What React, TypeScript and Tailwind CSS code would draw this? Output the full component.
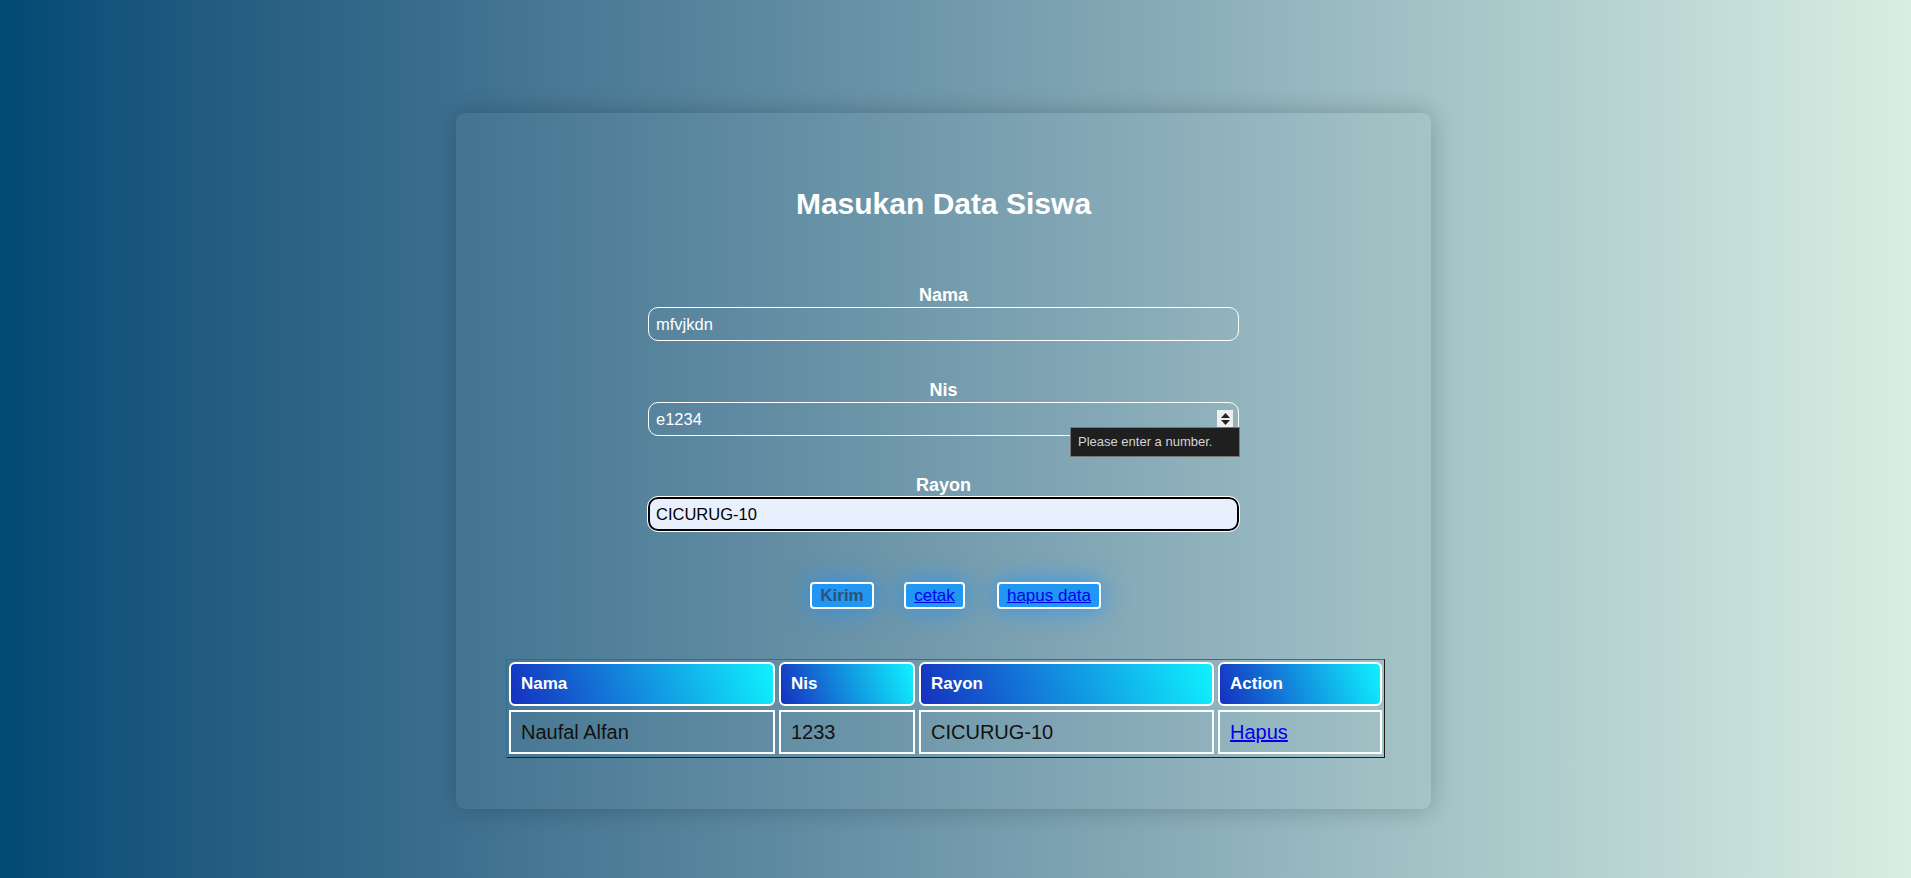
import React from "react";

function Field({
  label,
  value,
  children,
  variant = "plain",
}: {
  label: string;
  value: string;
  children?: React.ReactNode;
  variant?: "plain" | "focused";
}) {
  return (
    <div className="flex flex-col items-center">
      <label className="text-[18px] leading-[20px] font-bold text-white">{label}</label>
      <div className="relative mt-[2px] w-[591px]">
        {variant === "plain" ? (
          <input
            readOnly
            value={value}
            className="block h-[34px] w-full rounded-[10px] border border-white bg-transparent pl-[7px] text-[16.5px] text-white outline-none"
          />
        ) : (
          <input
            readOnly
            value={value}
            className="block h-[34px] w-full rounded-[10px] border-2 border-black bg-[#e8f0fe] pl-[6px] text-[16.5px] text-black outline-1 outline-white"
          />
        )}
        {children}
      </div>
    </div>
  );
}

export default function App() {
  const headers = ["Nama", "Nis", "Rayon", "Action"];
  return (
    <div className="flex min-h-[878px] w-full justify-center bg-gradient-to-r from-[#004a74] to-[#d8eee2] pr-[24px] pt-[113px] font-['Liberation_Sans',Arial,sans-serif]">
      <div className="flex h-[696px] w-[975px] flex-col items-center rounded-[9px] bg-white/[0.03] pt-[73px] shadow-[0_0_24px_rgba(0,0,0,0.22)]">
        <h1 className="text-[30px] leading-[36px] font-bold text-white">Masukan Data Siswa</h1>

        <div className="mt-[63px] flex flex-col gap-[39px]">
          <Field label="Nama" value="mfvjkdn" />
          <Field label="Nis" value="e1234">
            <div className="absolute right-[6px] top-[8px] flex h-[18px] w-[16px] flex-col items-center justify-center gap-[2px] bg-[#efefef]">
              <svg width="9" height="5" viewBox="0 0 9 5">
                <polygon points="4.5,0 9,5 0,5" fill="#222" />
              </svg>
              <svg width="9" height="5" viewBox="0 0 9 5">
                <polygon points="0,0 9,0 4.5,5" fill="#222" />
              </svg>
            </div>
            <div className="absolute left-[422px] top-[25px] z-10 flex h-[30px] w-[170px] items-center border border-[#767676] bg-[#1f1f1f] px-[7px] text-[13px] text-[#d4d4d4]">
              Please enter a number.
            </div>
          </Field>
          <Field label="Rayon" value="CICURUG-10" variant="focused" />
        </div>

        <div className="mt-[51px] flex items-center pl-[24px]">
          <button className="flex h-[27px] w-[64px] items-center justify-center rounded-[4px] border-2 border-white bg-[#2196f3] text-[17px] font-bold text-[#2f5372] shadow-[0_0_24px_rgba(30,144,255,0.8)]">
            Kirim
          </button>
          <a className="ml-[30px] flex h-[27px] w-[61px] items-center justify-center rounded-[4px] border-2 border-white bg-[#2196f3] text-[17px] text-[#0000ee] underline shadow-[0_0_24px_rgba(30,144,255,0.8)]">
            cetak
          </a>
          <a className="ml-[32px] flex h-[27px] w-[104px] items-center justify-center rounded-[4px] border-2 border-white bg-[#2196f3] text-[17px] text-[#0000ee] underline shadow-[0_0_24px_rgba(30,144,255,0.8)]">
            hapus data
          </a>
        </div>

        <div className="mt-[50px] ml-[4px] grid grid-cols-[266px_136px_295px_164px] gap-[4px] border border-t-[#2f7088] border-l-[#2f7088] border-r-[#1a1a1a] border-b-[#3a1414] px-[2px] pt-[2px] pb-[3px]">
          {headers.map((h) => (
            <div
              key={h}
              className="flex h-[44px] items-center rounded-[6px] border-2 border-white bg-[linear-gradient(70deg,#1530c0,#0ff2ff)] px-[10px] text-[17px] font-bold text-white"
            >
              {h}
            </div>
          ))}
          <div className="flex h-[44px] items-center border-2 border-white px-[10px] text-[20px] text-[#111]">Naufal Alfan</div>
          <div className="flex h-[44px] items-center border-2 border-white px-[10px] text-[20px] text-[#111]">1233</div>
          <div className="flex h-[44px] items-center border-2 border-white px-[10px] text-[20px] text-[#111]">CICURUG-10</div>
          <div className="flex h-[44px] items-center border-2 border-white px-[10px] text-[20px]">
            <a className="text-[#0000ee] underline">Hapus</a>
          </div>
        </div>
      </div>
    </div>
  );
}
